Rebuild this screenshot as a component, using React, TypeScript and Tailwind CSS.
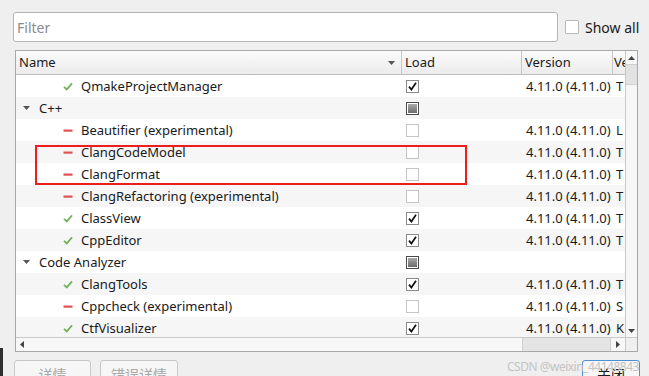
import React from 'react';

type Load = 'checked' | 'unchecked' | 'partial';
type Row =
  | { kind: 'group'; name: string; load: Load }
  | { kind: 'item'; icon: 'ok' | 'off'; name: string; load: Load; extra: string };

const rows: Row[] = [
  { kind: 'item', icon: 'ok', name: 'QmakeProjectManager', load: 'checked', extra: 'T' },
  { kind: 'group', name: 'C++', load: 'partial' },
  { kind: 'item', icon: 'off', name: 'Beautifier (experimental)', load: 'unchecked', extra: 'L' },
  { kind: 'item', icon: 'off', name: 'ClangCodeModel', load: 'unchecked', extra: 'T' },
  { kind: 'item', icon: 'off', name: 'ClangFormat', load: 'unchecked', extra: 'T' },
  { kind: 'item', icon: 'off', name: 'ClangRefactoring (experimental)', load: 'unchecked', extra: 'T' },
  { kind: 'item', icon: 'ok', name: 'ClassView', load: 'checked', extra: 'T' },
  { kind: 'item', icon: 'ok', name: 'CppEditor', load: 'checked', extra: 'T' },
  { kind: 'group', name: 'Code Analyzer', load: 'partial' },
  { kind: 'item', icon: 'ok', name: 'ClangTools', load: 'checked', extra: 'T' },
  { kind: 'item', icon: 'off', name: 'Cppcheck (experimental)', load: 'unchecked', extra: 'S' },
  { kind: 'item', icon: 'ok', name: 'CtfVisualizer', load: 'checked', extra: 'K' },
];

const CheckBox = ({ state }: { state: Load }) => {
  if (state === 'partial') {
    return (
      <div className="w-[13px] h-[13px] border border-[#4a4a4a] bg-white p-[1px]">
        <div className="w-full h-full bg-gradient-to-b from-[#a9a9a9] to-[#6c6c6c]" />
      </div>
    );
  }
  if (state === 'checked') {
    return (
      <div className="w-[13px] h-[13px] border border-[#8a8a8a] bg-white flex items-center justify-center">
        <svg width="9" height="9" viewBox="0 0 9 9">
          <path d="M1 4.6 L3.4 7.6 L8 0.8" fill="none" stroke="#111" strokeWidth="1.7" />
        </svg>
      </div>
    );
  }
  return <div className="w-[13px] h-[13px] border border-[#c4c4c4] bg-white" />;
};

const StatusIcon = ({ icon }: { icon: 'ok' | 'off' }) =>
  icon === 'ok' ? (
    <svg width="10" height="9" viewBox="0 0 10 9">
      <path d="M1 4.8 L3.8 7.4 L9 1.4" fill="none" stroke="#72b35c" strokeWidth="1.8" />
    </svg>
  ) : (
    <svg width="10" height="9" viewBox="0 0 10 9">
      <rect x="0.5" y="3.5" width="9" height="2.2" fill="#e05252" />
    </svg>
  );

const App = () => {
  return (
    <div
      className="relative w-[649px] h-[376px] overflow-hidden bg-[#efefef] text-[13px] text-[#1a1a1a]"
      style={{ fontFamily: '"Noto Sans", "Noto Sans CJK SC", sans-serif' }}
    >
      {/* filter row */}
      <div className="flex items-center pt-[12px] pl-[13px]">
        <div className="w-[545px] h-[30px] bg-white border border-[#b4b4b4] rounded-[3px] flex items-center pl-[3px] text-[14px] text-[#8a8a8a]">
          Filter
        </div>
        <div className="ml-[7px] w-[14px] h-[14px] border border-[#b8b8b8] bg-white rounded-[1px]" />
        <span className="ml-[6px] text-[14px]">Show all</span>
      </div>

      {/* plugin table */}
      <div className="ml-[15px] mt-[8px] w-[623px] h-[302px] border border-[#a8a8a8] flex bg-white">
        <div className="w-[609px] flex flex-col">
          <div className="h-[24px] flex border-b border-[#bdbdbd] bg-gradient-to-b from-[#fbfbfb] to-[#ebebeb]">
            <div className="w-[386px] flex items-center justify-between pl-[3px] pr-[6px] border-r border-[#c6c6c6]">
              <span className="pt-[1px]">Name</span>
              <svg width="7" height="4" viewBox="0 0 7 4">
                <path d="M0 0 H7 L3.5 4 Z" fill="#555" />
              </svg>
            </div>
            <div className="w-[120px] flex items-center pl-[3px] pt-[1px] border-r border-[#c6c6c6]">Load</div>
            <div className="w-[91px] flex items-center pl-[3px] pt-[1px] border-r border-[#c6c6c6]">Version</div>
            <div className="w-[12px] flex items-center pl-[1px] pt-[1px] overflow-hidden whitespace-nowrap">Ve</div>
          </div>

          <div className="flex-1 overflow-hidden">
            {rows.map((r, i) => (
              <div key={i} className={`h-[22px] flex items-center ${i % 2 ? 'bg-[#f6f6f6]' : 'bg-white'}`}>
                <div className="w-[386px] flex items-center">
                  {r.kind === 'group' ? (
                    <>
                      <svg className="ml-[7px]" width="7" height="4" viewBox="0 0 7 4">
                        <path d="M0 0 H7 L3.5 4 Z" fill="#555" />
                      </svg>
                      <span className="ml-[9px] pt-[2px]">{r.name}</span>
                    </>
                  ) : (
                    <>
                      <span className="ml-[47px] flex">
                        <StatusIcon icon={r.icon} />
                      </span>
                      <span className="ml-[8px] pt-[2px]">{r.name}</span>
                    </>
                  )}
                </div>
                <div className="w-[120px] pl-[4px] flex items-center">
                  <CheckBox state={r.load} />
                </div>
                <div className="w-[91px] pl-[4px] pt-[2px] whitespace-nowrap">
                  {r.kind === 'item' ? '4.11.0 (4.11.0)' : ''}
                </div>
                <div className="w-[12px] pl-[3px] pt-[2px] overflow-hidden">{r.kind === 'item' ? r.extra : ''}</div>
              </div>
            ))}
          </div>

          {/* horizontal scrollbar */}
          <div className="h-[14px] flex items-center border-t border-[#c8c8c8] bg-[#f7f7f7]">
            <div className="w-[12px] flex justify-center">
              <svg width="4" height="7" viewBox="0 0 4 7">
                <path d="M4 0 V7 L0 3.5 Z" fill="#444" />
              </svg>
            </div>
            <div className="w-[494px]" />
            <div className="w-[89px] h-full bg-[#e4e4e4] border-l border-r border-[#d0d0d0]" />
            <div className="w-[14px] flex justify-center">
              <svg width="4" height="7" viewBox="0 0 4 7">
                <path d="M0 0 V7 L4 3.5 Z" fill="#444" />
              </svg>
            </div>
          </div>
        </div>

        {/* vertical scrollbar */}
        <div className="w-[13px] flex flex-col border-l border-[#c8c8c8]">
          <div className="flex-1 flex flex-col bg-[#f7f7f7]">
            <div className="h-[13px] flex items-center justify-center">
              <svg width="7" height="4" viewBox="0 0 7 4">
                <path d="M0 4 H7 L3.5 0 Z" fill="#444" />
              </svg>
            </div>
            <div className="h-[21px] bg-[#e2e2e2] border-t border-b border-[#d0d0d0]" />
            <div className="flex-1" />
            <div className="h-[12px] flex items-center justify-center">
              <svg width="7" height="4" viewBox="0 0 7 4">
                <path d="M0 0 H7 L3.5 4 Z" fill="#444" />
              </svg>
            </div>
          </div>
          <div className="h-[14px] border-t border-[#c8c8c8] bg-[#efefef]" />
        </div>
      </div>

      {/* bottom buttons */}
      <div className="flex items-start mt-[8px] pl-[14px] pr-[9px] text-[14px]">
        <div className="w-[77px] h-[28px] border border-[#c8c8c8] rounded-[3px] bg-[#f6f6f6] flex justify-center pt-[3px] text-[#a8a8a8]">
          详情
        </div>
        <div className="ml-[9px] w-[78px] h-[28px] border border-[#c8c8c8] rounded-[3px] bg-[#f6f6f6] flex justify-center pt-[3px] text-[#a8a8a8]">
          错误详情
        </div>
        <div className="ml-auto w-[58px] h-[28px] border border-[#4b8fd6] rounded-[3px] bg-[#f6f6f6] flex justify-center pt-[3px]">
          关闭
        </div>
      </div>

      {/* red highlight */}
      <div className="absolute left-[35px] top-[145px] w-[432px] h-[40px] border-2 border-[#ee1d1d]" />

      {/* watermark */}
      <div className="absolute left-[507px] top-[358px] text-[12px] tracking-[-0.5px] text-[#c4c4c4] whitespace-nowrap">
        CSDN @weixin_44148843
      </div>

      {/* dark strip at lower left */}
      <div className="absolute left-0 top-[348px] w-[3px] h-[28px] bg-[#2e2e2e]" />
    </div>
  );
};

export default App;
